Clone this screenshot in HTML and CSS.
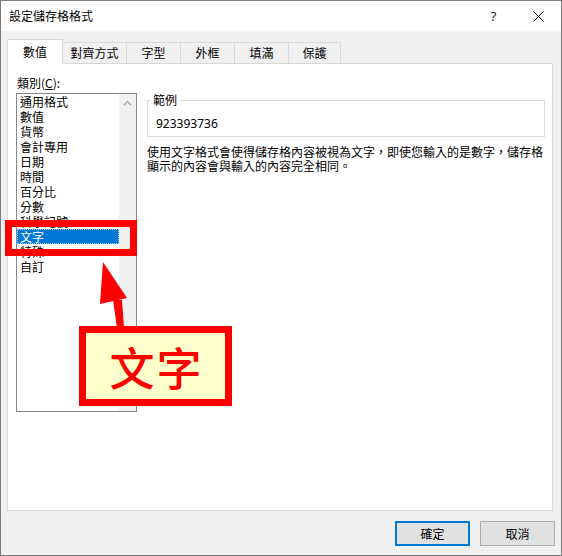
FILE: index.html
```html
<!DOCTYPE html>
<html lang="zh-Hant">
<head>
<meta charset="utf-8">
<title>設定儲存格格式</title>
<link rel="stylesheet" href="styles.css">
</head>
<body>
<div class="window">
  <div class="titlebar">
    <span class="title">設定儲存格格式</span>
    <span class="tb-btn help">?</span>
    <span class="tb-btn close">
      <svg width="11" height="11" viewBox="0 0 11 11"><path d="M0.5 0.5L10.5 10.5M10.5 0.5L0.5 10.5" stroke="#111" stroke-width="1" fill="none"/></svg>
    </span>
  </div>
  <div class="client">
    <div class="tabs">
      <div class="tab active">數值</div>
      <div class="tab w64">對齊方式</div>
      <div class="tab w54">字型</div>
      <div class="tab w54">外框</div>
      <div class="tab w54">填滿</div>
      <div class="tab w52">保護</div>
    </div>
    <div class="panel">
      <div class="left">
        <div class="label">類別(<u>C</u>):</div>
        <div class="listbox">
          <ul class="items">
            <li>通用格式</li>
            <li>數值</li>
            <li>貨幣</li>
            <li>會計專用</li>
            <li>日期</li>
            <li>時間</li>
            <li>百分比</li>
            <li>分數</li>
            <li>科學記號</li>
            <li class="selected">文字</li>
            <li>特殊</li>
            <li>自訂</li>
          </ul>
          <div class="scrollbar">
            <svg class="chev" width="9" height="6" viewBox="0 0 9 6"><path d="M1 5L4.5 1.5L8 5" stroke="#a3a3a3" stroke-width="1.3" fill="none"/></svg>
          </div>
        </div>
      </div>
      <div class="right">
        <fieldset class="sample">
          <legend>範例</legend>
          <div class="value">923393736</div>
        </fieldset>
        <p class="desc">使用文字格式會使得儲存格內容被視為文字，即使您輸入的是數字，儲存格<br>顯示的內容會與輸入的內容完全相同。</p>
      </div>
    </div>
    <div class="buttons">
      <button class="btn primary">確定</button>
      <button class="btn">取消</button>
    </div>
  </div>

  <div class="mark-box"></div>
  <svg class="arrow" width="562" height="556" viewBox="0 0 562 556">
    <polygon points="103,262 100,304 127,298" fill="#ff0000"/>
    <polygon points="113,300 122,300 124,328 117,328" fill="#ff0000"/>
  </svg>
  <div class="callout">文字</div>
</div>
</body>
</html>
```

FILE: styles.css
```css
* {
  box-sizing: border-box;
}

html, body {
  margin: 0;
  padding: 0;
}

body {
  background: #bdbdbd;
  font-family: "Noto Sans CJK TC", "Noto Sans", sans-serif;
  font-size: 12px;
  color: #000;
}

.window {
  position: relative;
  width: 562px;
  height: 556px;
  border: 1px solid #7a7a7a;
  background: #f0f0f0;
  display: flex;
  flex-direction: column;
}

/* title bar */
.titlebar {
  height: 30px;
  background: #fff;
  display: flex;
  align-items: center;
  flex: none;
}

.title {
  flex: 1;
  padding-left: 8px;
  line-height: 30px;
  font-size: 12px;
}

.tb-btn {
  width: 46px;
  height: 30px;
  display: flex;
  align-items: center;
  justify-content: center;
}

.help {
  font-family: "Noto Sans", sans-serif;
  font-size: 13px;
  color: #222;
  padding-left: 3px;
}

/* client */
.client {
  flex: 1;
  display: flex;
  flex-direction: column;
  padding: 8px 6px 9px 6px;
}

.tabs {
  display: flex;
  align-items: flex-end;
  height: 24px;
  flex: none;
}

.tab {
  height: 21px;
  line-height: 20px;
  text-align: center;
  border-top: 1px solid #d9d9d9;
  border-right: 1px solid #d9d9d9;
  background: #f0f0f0;
  white-space: nowrap;
}

.tab.active {
  width: 56px;
  height: 25px;
  line-height: 23px;
  border: 1px solid #d9d9d9;
  border-bottom: none;
  background: #fff;
  margin-bottom: -1px;
  position: relative;
  z-index: 2;
}

.w64 { width: 64px; }
.w54 { width: 54px; }
.w52 { width: 52px; }

.panel {
  height: 448px;
  margin-right: 2px;
  background: #fff;
  border: 1px solid #d9d9d9;
  display: flex;
  padding: 11px 0 0 8px;
  flex: none;
}

.left {
  width: 121px;
  flex: none;
}

.label {
  line-height: 15px;
  padding-left: 1px;
}

.listbox {
  margin-top: 3px;
  height: 319px;
  border: 1px solid #828790;
  display: flex;
}

.items {
  list-style: none;
  margin: 0;
  padding: 0;
  width: 102px;
  flex: none;
}

.items li {
  height: 15px;
  line-height: 15px;
  padding-left: 3px;
  white-space: nowrap;
}

.items li.selected {
  background: #0078d7;
  color: #fff;
  outline: 1px dotted #9fd0ff;
  outline-offset: -1px;
}

.scrollbar {
  flex: 1;
  background: #f0f0f0;
  display: flex;
  justify-content: center;
  padding-top: 6px;
}

.chev {
  display: block;
}

.right {
  margin-left: 10px;
  width: 398px;
  padding-top: 18px;
}

.sample {
  margin: 0;
  border: 1px solid #dcdcdc;
  padding: 0 8px 3px 8px;
  height: 44px;
}

.sample legend {
  padding: 0 2px;
  margin-left: -5px;
  line-height: 14px;
  font-size: 12px;
}

.value {
  margin-top: 9px;
  line-height: 16px;
  font-family: "Noto Sans", sans-serif;
  font-size: 12px;
}

.desc {
  margin: 8px 0 0 0;
  line-height: 14px;
  font-size: 12px;
  white-space: nowrap;
}

/* buttons */
.buttons {
  display: flex;
  justify-content: flex-end;
  gap: 10px;
  margin-top: 10px;
}

.btn {
  width: 75px;
  height: 25px;
  background: #e1e1e1;
  border: 1px solid #adadad;
  font-family: "Noto Sans CJK TC", sans-serif;
  font-size: 12px;
  color: #000;
  padding: 0;
  margin: 0;
}

.btn.primary {
  border: 2px solid #0078d7;
}

/* annotations */
.mark-box {
  position: absolute;
  left: 4px;
  top: 219px;
  width: 132px;
  height: 36px;
  border: 7px solid #ff0000;
}

.arrow {
  position: absolute;
  left: -1px;
  top: -1px;
}

.callout {
  position: absolute;
  left: 78px;
  top: 325px;
  width: 153px;
  height: 80px;
  border: 7px solid #ff0000;
  background: #ffffcc;
  color: #ff0000;
  font-family: "Noto Sans CJK TC", sans-serif;
  font-weight: 500;
  font-size: 45px;
  letter-spacing: 2px;
  text-indent: 2px;
  display: flex;
  align-items: center;
  justify-content: center;
  line-height: 1;
}
```
